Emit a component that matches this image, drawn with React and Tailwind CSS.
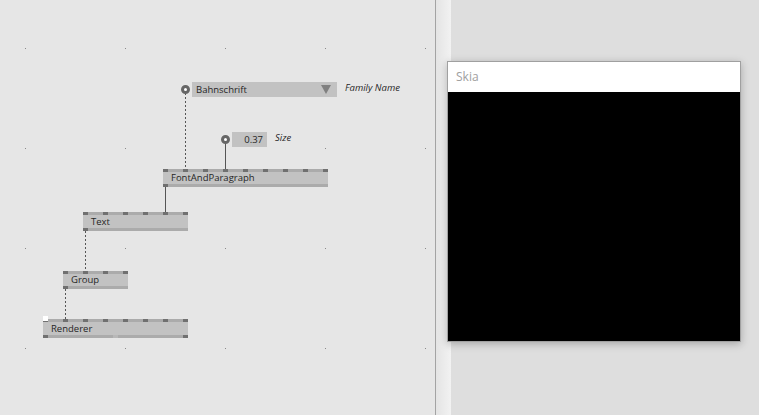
import React from "react";

const font = { fontFamily: '"Open Sans", "Noto Sans", sans-serif' };

// node: x, y, width, label, number of top pins
const nodes = [
  { label: "FontAndParagraph", x: 163, y: 169, w: 165, pins: 9, h: 18 },
  { label: "Text", x: 83, y: 212, w: 105, pins: 6, h: 19 },
  { label: "Group", x: 63, y: 271, w: 65, pins: 4, h: 18 },
  { label: "Renderer", x: 43, y: 319, w: 145, pins: 8, h: 19, renderer: true },
];

const Node = ({ node }) => (
  <div
    className="absolute flex flex-col"
    style={{ left: node.x, top: node.y, width: node.w, height: node.h }}
  >
    <div className="relative h-[3px] bg-[#ababab]">
      {Array.from({ length: node.pins }).map((_, i) => (
        <div
          key={i}
          className="absolute top-0 h-[3px] w-[5px] bg-[#707070]"
          style={{ left: i * 20 }}
        />
      ))}
    </div>
    <div className="flex flex-1 items-center bg-[#c2c2c2] pl-[8px] text-[9.5px] leading-none text-[#262626]" style={font}>
      {node.label}
    </div>
    <div className="relative h-[3px] bg-[#ababab]">
      <div className="absolute left-0 top-0 h-[3px] w-[5px] bg-[#707070]" />
      {node.renderer && (
        <>
          <div className="absolute left-[70px] top-0 h-[3px] w-[5px] bg-[#b8b8b8]" />
          <div className="absolute right-0 top-0 h-[3px] w-[5px] bg-[#707070]" />
        </>
      )}
    </div>
    {node.renderer && (
      <div className="absolute left-0 top-[-3px] h-[5px] w-[5px] bg-white" />
    )}
  </div>
);

const Pin = ({ x, y }) => (
  <circle cx={x} cy={y} r="3" fill="#ffffff" stroke="#666666" strokeWidth="3" />
);

const Canvas = () => {
  const dots = [];
  for (let gx = 25; gx < 435; gx += 100) {
    for (let gy = 48; gy < 415; gy += 100) {
      dots.push([gx, gy]);
    }
  }
  return (
    <div className="relative h-full w-[435px] shrink-0 overflow-hidden bg-[#e6e6e6]">
      {dots.map(([dx, dy]) => (
        <div
          key={`${dx}-${dy}`}
          className="absolute h-px w-px bg-[#8a8a8a]"
          style={{ left: dx, top: dy }}
        />
      ))}

      <svg className="absolute inset-0" width="435" height="415">
        <line x1="185.5" y1="93" x2="185.5" y2="170" stroke="#555" strokeDasharray="2 2" />
        <line x1="225.5" y1="143" x2="225.5" y2="170" stroke="#555" />
        <line x1="165.5" y1="187" x2="165.5" y2="213" stroke="#555" />
        <line x1="85.5" y1="231" x2="85.5" y2="272" stroke="#555" strokeDasharray="2 2" />
        <line x1="65.5" y1="289" x2="65.5" y2="320" stroke="#555" strokeDasharray="2 2" />
        <Pin x={185.5} y={89.5} />
        <Pin x={225.5} y={139.5} />
      </svg>

      {/* Family name enum input */}
      <div
        className="absolute left-[192px] top-[82px] flex h-[15px] w-[145px] items-center justify-between bg-[#c2c2c2] pl-[4px] pr-[6px] text-[9.5px] leading-none text-[#262626]"
        style={font}
      >
        <span>Bahnschrift</span>
        <svg width="10" height="9" viewBox="0 0 10 9">
          <polygon points="0,0 10,0 5,9" fill="#808080" />
        </svg>
      </div>
      <div className="absolute left-[345px] top-[83px] text-[9.5px] italic leading-none text-[#262626]" style={font}>
        Family Name
      </div>

      {/* Size input */}
      <div
        className="absolute left-[232px] top-[132px] flex h-[15px] w-[35px] items-center justify-end bg-[#c2c2c2] pr-[4px] text-[9.5px] leading-none text-[#262626]"
        style={font}
      >
        0.37
      </div>
      <div className="absolute left-[275px] top-[133px] text-[9.5px] italic leading-none text-[#262626]" style={font}>
        Size
      </div>

      {nodes.map((n) => (
        <Node key={n.label} node={n} />
      ))}
    </div>
  );
};

export default function App() {
  return (
    <div className="relative flex h-[415px] w-[759px] overflow-hidden">
      <Canvas />
      <div className="w-px shrink-0 bg-[#a3a3a3]" />
      <div className="w-[15px] shrink-0 bg-gradient-to-r from-[#e4e4e4] to-[#f2f2f2]" />
      <div className="flex-1 bg-[#dedede]" />

      {/* Skia render window */}
      <div className="absolute left-[447px] top-[61px] flex h-[281px] w-[294px] flex-col border border-[#a0a0a0] bg-white shadow-[0_2px_8px_rgba(0,0,0,0.25)]">
        <div className="flex h-[30px] items-center pl-[8px] text-[12px] text-[#a0a0a0]" style={font}>
          Skia
        </div>
        <div className="flex-1 bg-black" />
      </div>
    </div>
  );
}
